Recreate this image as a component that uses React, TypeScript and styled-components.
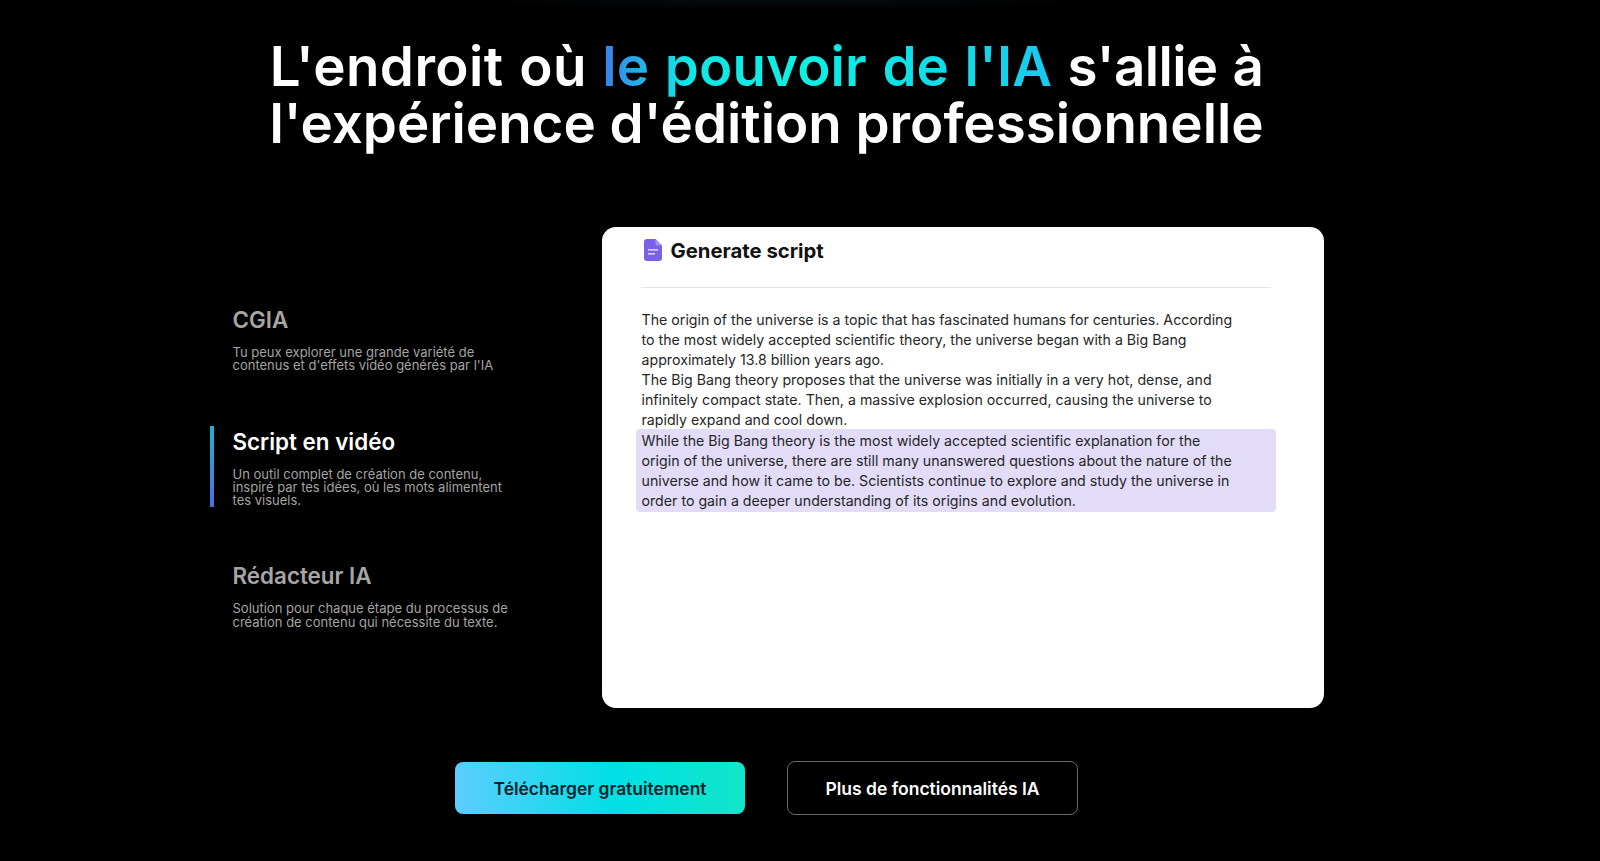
import React from "react";
import styled, { createGlobalStyle } from "styled-components";

const GlobalStyle = createGlobalStyle`
  html, body {
    margin: 0;
    padding: 0;
    background: #000;
  }
  body {
    font-family: "Inter", "Liberation Sans", sans-serif;
  }
`;

const Page = styled.div`
  width: 1600px;
  height: 861px;
  box-sizing: border-box;
  padding-right: 67px;
  overflow: hidden;
  background: #000;
  display: flex;
  flex-direction: column;
  align-items: center;
  background-image: radial-gradient(
    ellipse 300px 10px at 780px 0,
    rgba(30, 80, 110, 0.16),
    rgba(0, 0, 0, 0)
  );
`;

const Headline = styled.h1`
  margin: 38px 0 0;
  font-size: 54.7px;
  line-height: 57px;
  font-weight: 600;
  color: #fff;
  text-align: center;
  white-space: nowrap;
`;

const HeadlineLine = styled.span<{ $words?: number }>`
  display: block;
  word-spacing: ${(p) => p.$words ?? 0}px;
  height: 57px;
`;

const Tracked = styled.span<{ $track: number }>`
  letter-spacing: ${(p) => p.$track}px;
`;

const Accent = styled.span`
  letter-spacing: 0.1px;
  background: linear-gradient(90deg, #3a7fec 0%, #12e4e6 18%, #0df0e2 45%, #18c9ee 100%);
  -webkit-background-clip: text;
  background-clip: text;
  color: transparent;
`;

const Showcase = styled.div`
  display: flex;
  align-items: flex-start;
  margin-top: 75px;
  width: 1114px;
`;

const FeatureList = styled.div`
  width: 392px;
  padding-top: 79px;
  display: flex;
  flex-direction: column;
`;

const Feature = styled.div<{ $gap?: number }>`
  position: relative;
  padding-left: 23px;
  margin-bottom: ${(p) => p.$gap ?? 0}px;
`;

const ActiveBar = styled.div`
  position: absolute;
  left: 0;
  top: -2px;
  width: 4px;
  height: 81px;
  background: linear-gradient(180deg, #22b4cc, #4a6fe0);
`;

const FeatureTitle = styled.div<{ $active?: boolean }>`
  font-size: 22.4px;
  line-height: 28px;
  font-weight: 600;
  color: ${(p) => (p.$active ? "#fff" : "#a6a6a6")};
`;

const FeatureText = styled.div`
  margin-top: 12px;
  font-size: 13px;
  line-height: 13.3px;
  color: #a4a4a4;
`;

const Card = styled.section`
  width: 722px;
  height: 481px;
  box-sizing: border-box;
  background: #fff;
  border-radius: 14px;
  padding: 0 47px 0 34px;
`;

const CardHeader = styled.div`
  display: flex;
  align-items: center;
  gap: 9px;
  height: 46px;
  margin: 0 4px 14px 5px;
  padding-left: 3px;
`;

const CardTitle = styled.div`
  font-size: 20.3px;
  font-weight: 700;
  color: #111;
`;

const Divider = styled.div`
  height: 1px;
  background: #e4e4e4;
  margin: 0 6px 0 5px;
`;

const Script = styled.div`
  margin-top: 22px;
  font-size: 14.2px;
  line-height: 19.9px;
  color: #262626;
`;

const ScriptBlock = styled.p`
  margin: 0 0 0 6px;
  white-space: nowrap;
`;

const Highlighted = styled.p`
  margin: 0;
  padding: 2px 6px 1px;
  background: #e2dcf9;
  border-radius: 4px;
  width: 640px;
  box-sizing: border-box;
  white-space: nowrap;
`;

const Actions = styled.div`
  display: flex;
  align-items: center;
  gap: 42px;
  margin-top: 53px;
`;

const PrimaryButton = styled.button`
  width: 290px;
  height: 52px;
  border: none;
  border-radius: 8px;
  background: linear-gradient(90deg, #5ccdff 0%, #00dfe6 55%, #12e6c8 100%);
  color: #04222c;
  font: 600 17.4px "Inter", sans-serif;
`;

const SecondaryButton = styled.button`
  width: 291px;
  height: 54px;
  border: 1px solid #6a6a6a;
  border-radius: 8px;
  background: #000;
  color: #fff;
  font: 600 17.5px "Inter", sans-serif;
`;

const DocIcon = () => (
  <svg width="18" height="22" viewBox="0 0 18 22">
    <path d="M3 0h8.5L18 6.5V19a3 3 0 0 1-3 3H3a3 3 0 0 1-3-3V3a3 3 0 0 1 3-3z" fill="#7b61e8" />
    <path d="M11.5 0L18 6.5h-4.5a2 2 0 0 1-2-2z" fill="#a897f2" />
    <rect x="4" y="10" width="10" height="1.6" fill="#d9d2fa" />
    <rect x="4" y="14" width="7" height="1.6" fill="#d9d2fa" />
  </svg>
);

export default function App() {
  return (
    <>
      <GlobalStyle />
      <Page>
        <Headline>
          <HeadlineLine $words={1.7}>
            <Tracked $track={0.4}>L'endroit où</Tracked> <Accent>le pouvoir de l'IA</Accent>{" "}
            <Tracked $track={-0.6}>s'allie à</Tracked>
          </HeadlineLine>
          <HeadlineLine>l'expérience d'édition professionnelle</HeadlineLine>
        </Headline>
        <Showcase>
          <FeatureList>
            <Feature $gap={55}>
              <FeatureTitle>CGIA</FeatureTitle>
              <FeatureText>
                Tu peux explorer une grande variété de
                <br />
                contenus et d'effets vidéo générés par l'IA
              </FeatureText>
            </Feature>
            <Feature $gap={55}>
              <ActiveBar />
              <FeatureTitle $active>Script en vidéo</FeatureTitle>
              <FeatureText>
                Un outil complet de création de contenu,
                <br />
                inspiré par tes idées, où les mots alimentent
                <br />
                tes visuels.
              </FeatureText>
            </Feature>
            <Feature>
              <FeatureTitle>Rédacteur IA</FeatureTitle>
              <FeatureText>
                Solution pour chaque étape du processus de
                <br />
                création de contenu qui nécessite du texte.
              </FeatureText>
            </Feature>
          </FeatureList>
          <Card>
            <CardHeader>
              <DocIcon />
              <CardTitle>Generate script</CardTitle>
            </CardHeader>
            <Divider />
            <Script>
              <ScriptBlock>
                The origin of the universe is a topic that has fascinated humans for centuries. According
                <br />
                to the most widely accepted scientific theory, the universe began with a Big Bang
                <br />
                approximately 13.8 billion years ago.
                <br />
                The Big Bang theory proposes that the universe was initially in a very hot, dense, and
                <br />
                infinitely compact state. Then, a massive explosion occurred, causing the universe to
                <br />
                rapidly expand and cool down.
              </ScriptBlock>
              <Highlighted>
                While the Big Bang theory is the most widely accepted scientific explanation for the
                <br />
                origin of the universe, there are still many unanswered questions about the nature of the
                <br />
                universe and how it came to be. Scientists continue to explore and study the universe in
                <br />
                order to gain a deeper understanding of its origins and evolution.
              </Highlighted>
            </Script>
          </Card>
        </Showcase>
        <Actions>
          <PrimaryButton>Télécharger gratuitement</PrimaryButton>
          <SecondaryButton>Plus de fonctionnalités IA</SecondaryButton>
        </Actions>
      </Page>
    </>
  );
}
